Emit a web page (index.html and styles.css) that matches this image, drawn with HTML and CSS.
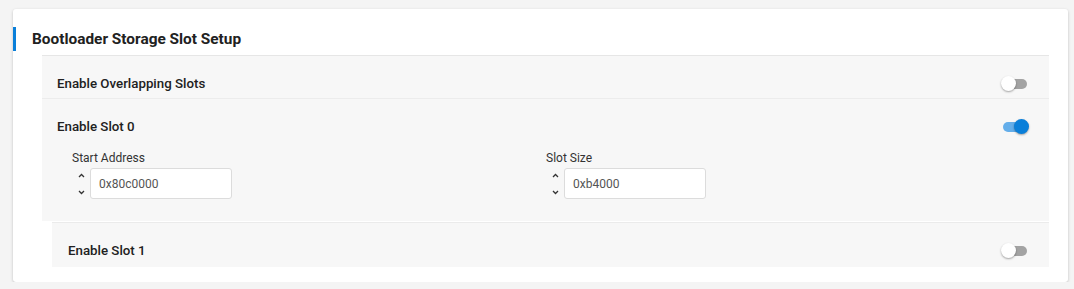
FILE: index.html
```html
<!DOCTYPE html>
<html lang="en">
<head>
  <meta charset="UTF-8">
  <title>Bootloader Storage Slot Setup</title>
  <link rel="stylesheet" href="styles.css">
</head>
<body>

  <div class="carte">
    <h2 class="titre">Bootloader Storage Slot Setup</h2>

    <div class="section">
      <div class="ligne ligne-haut">
        <span class="libelle">Enable Overlapping Slots</span>
        <span class="interrupteur"><span class="bouton"></span></span>
      </div>

      <div class="ligne ligne-slot">
        <div class="entete">
          <span class="libelle">Enable Slot 0</span>
          <span class="interrupteur actif"><span class="bouton"></span></span>
        </div>
        <div class="champs">
          <div class="champ">
            <label>Start Address</label>
            <div class="saisie">
              <span class="fleches">
                <svg width="7" height="5" viewBox="0 0 7 5"><path d="M1 4 L3.5 1.5 L6 4" fill="none" stroke="#333" stroke-width="1.3"/></svg>
                <svg width="7" height="5" viewBox="0 0 7 5"><path d="M1 1 L3.5 3.5 L6 1" fill="none" stroke="#333" stroke-width="1.3"/></svg>
              </span>
              <input type="text" value="0x80c0000">
            </div>
          </div>
          <div class="champ">
            <label>Slot Size</label>
            <div class="saisie">
              <span class="fleches">
                <svg width="7" height="5" viewBox="0 0 7 5"><path d="M1 4 L3.5 1.5 L6 4" fill="none" stroke="#333" stroke-width="1.3"/></svg>
                <svg width="7" height="5" viewBox="0 0 7 5"><path d="M1 1 L3.5 3.5 L6 1" fill="none" stroke="#333" stroke-width="1.3"/></svg>
              </span>
              <input type="text" value="0xb4000">
            </div>
          </div>
        </div>
      </div>

      <div class="ligne ligne-bas">
        <span class="libelle">Enable Slot 1</span>
        <span class="interrupteur"><span class="bouton"></span></span>
      </div>
    </div>
  </div>

</body>
</html>
```

FILE: styles.css
```css
body {
  font-family: Roboto, 'Liberation Sans', sans-serif;
  margin: 0;
  padding: 9px 6px 0 13px;
  background: #f4f4f4;
  color: #212121;
}

.carte {
  background: #fff;
  height: 273px;
  border-radius: 3px;
  box-shadow: 0 1px 3px rgba(0,0,0,0.22);
  box-sizing: border-box;
  padding-top: 18px;
}

.titre {
  margin: 0;
  height: 24px;
  line-height: 24px;
  font-size: 15.4px;
  font-weight: 700;
  border-left: 3px solid #0a7fd9;
  padding-left: 16px;
}

.section {
  margin: 4px 19px 0 29px;
  border-top: 1px solid #e6e6e6;
}

.ligne {
  background: #f7f7f7;
  padding: 20px 22px 6px 15px;
}

.ligne-haut, .ligne-bas, .entete {
  display: flex;
  justify-content: space-between;
  align-items: center;
  line-height: 16px;
}

.ligne-haut {
  border-bottom: 1px solid #ececec;
}

.ligne-slot {
  padding-bottom: 22px;
}

.ligne-bas {
  margin-left: 10px;
  margin-top: 1px;
  border-top: 1px solid #ebebeb;
  padding-left: 16px;
  padding-top: 20px;
  padding-bottom: 8px;
}

.libelle {
  font-size: 13.3px;
  font-weight: 500;
}

.interrupteur {
  position: relative;
  width: 24px;
  height: 10px;
  border-radius: 5px;
  background: #a3a3a3;
}

.interrupteur .bouton {
  position: absolute;
  top: -3px;
  left: -2px;
  width: 15px;
  height: 15px;
  border-radius: 50%;
  background: #fff;
  box-shadow: 0 1px 2px rgba(0,0,0,0.35);
}

.interrupteur.actif {
  background: #64aeea;
}

.interrupteur.actif .bouton {
  left: 11px;
  background: #0a7fd9;
}

.champs {
  display: grid;
  grid-template-columns: 474px 474px;
  padding-left: 15px;
  margin-top: 16px;
}

.champ label {
  display: block;
  font-size: 12px;
  line-height: 14px;
  color: #333;
  margin-bottom: 3px;
}

.saisie {
  display: flex;
  align-items: center;
}

.fleches {
  width: 18px;
  display: flex;
  flex-direction: column;
  align-items: center;
  gap: 12px;
}

.fleches svg {
  display: block;
}

input {
  width: 142px;
  height: 31px;
  box-sizing: border-box;
  padding: 0 8px;
  border: 1px solid #dcdcdc;
  border-radius: 3px;
  background: #fff;
  font-family: inherit;
  font-size: 12px;
  color: #555;
}
```
